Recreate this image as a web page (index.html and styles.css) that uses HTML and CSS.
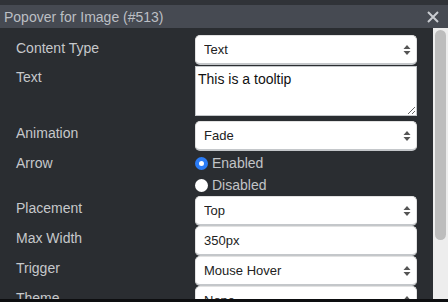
FILE: index.html
```html
<!DOCTYPE html>
<html lang="en">
<head>
  <meta charset="UTF-8">
  <meta name="viewport" content="width=device-width, initial-scale=1.0">
  <title>Popover for Image</title>
  <link rel="stylesheet" href="styles.css">
</head>
<body>
  <div class="dialog">
    <header class="titlebar">
      <h1>Popover for Image (#513)</h1>
      <button class="close" aria-label="Close">
        <svg width="12" height="12" viewBox="0 0 12 12"><path d="M1 1L11 11M11 1L1 11" stroke="#c9ccd1" stroke-width="2"/></svg>
      </button>
    </header>

    <div class="body">
      <form class="settings">
        <label class="label first">Content Type</label>
        <div class="select">
          <select><option>Text</option></select>
          <svg class="arrows" width="8" height="12" viewBox="0 0 8 12"><path d="M4 1L7.5 5H0.5Z M4 11L7.5 7H0.5Z" fill="#555"/></svg>
        </div>

        <label class="label">Text</label>
        <textarea class="textarea">This is a tooltip</textarea>

        <label class="label gap">Animation</label>
        <div class="select gap">
          <select><option>Fade</option></select>
          <svg class="arrows" width="8" height="12" viewBox="0 0 8 12"><path d="M4 1L7.5 5H0.5Z M4 11L7.5 7H0.5Z" fill="#555"/></svg>
        </div>

        <label class="label">Arrow</label>
        <div class="radios">
          <label class="radio"><span class="dot checked"></span>Enabled</label>
          <label class="radio"><span class="dot"></span>Disabled</label>
        </div>

        <label class="label">Placement</label>
        <div class="select">
          <select><option>Top</option></select>
          <svg class="arrows" width="8" height="12" viewBox="0 0 8 12"><path d="M4 1L7.5 5H0.5Z M4 11L7.5 7H0.5Z" fill="#555"/></svg>
        </div>

        <label class="label">Max Width</label>
        <input class="input" type="text" value="350px">

        <label class="label">Trigger</label>
        <div class="select">
          <select><option>Mouse Hover</option></select>
          <svg class="arrows" width="8" height="12" viewBox="0 0 8 12"><path d="M4 1L7.5 5H0.5Z M4 11L7.5 7H0.5Z" fill="#555"/></svg>
        </div>

        <label class="label">Theme</label>
        <div class="select">
          <select><option>None</option></select>
          <svg class="arrows" width="8" height="12" viewBox="0 0 8 12"><path d="M4 1L7.5 5H0.5Z M4 11L7.5 7H0.5Z" fill="#555"/></svg>
        </div>
      </form>

      <div class="scrollbar">
        <div class="thumb"></div>
      </div>
    </div>
  </div>
</body>
</html>
```

FILE: styles.css
```css
html, body {
  margin: 0;
  padding: 0;
  height: 302px;
  overflow: hidden;
}

body {
  background-color: #2a2d31;
  font-family: "Liberation Sans", Arial, sans-serif;
}

.dialog {
  height: 302px;
  overflow: hidden;
  border-top: 5px solid #303338;
  border-bottom: 3px solid #0d0e10;
  box-sizing: border-box;
  display: flex;
  flex-direction: column;
}

.titlebar {
  height: 23px;
  background-color: #464a52;
  display: flex;
  align-items: center;
  justify-content: space-between;
  padding: 0 4px;
  flex-shrink: 0;
}

.titlebar h1 {
  margin: 0;
  font-size: 14px;
  font-weight: normal;
  color: #bcbfc4;
}

.close {
  background: none;
  border: none;
  padding: 0;
  margin-right: 5px;
  display: flex;
}

.body {
  flex: 1;
  display: flex;
  overflow: hidden;
}

.settings {
  flex: 1;
  display: grid;
  grid-template-columns: 195px 222px;
  align-content: start;
  padding-top: 7px;
}

.label {
  padding-left: 16px;
  padding-top: 4px;
  font-size: 14px;
  color: #c6c8cb;
  align-self: start;
}

.label.first {
  padding-top: 5px;
}

.label.gap {
  margin-top: 5px;
}

.select {
  position: relative;
  height: 30px;
}

.select.gap {
  margin-top: 5px;
}

.select select,
.input {
  width: 100%;
  height: 30px;
  box-sizing: border-box;
  appearance: none;
  -webkit-appearance: none;
  background: #fff;
  border: 1px solid #e2e2e2;
  border-bottom: 2px solid #c4c7ca;
  border-radius: 5px;
  padding: 0 8px;
  font-family: "Liberation Sans", Arial, sans-serif;
  font-size: 13px;
  color: #222;
  outline: none;
}

.arrows {
  position: absolute;
  right: 6px;
  top: 9px;
}

.textarea {
  width: 222px;
  height: 50px;
  box-sizing: border-box;
  margin-top: 1px;
  border: 1px solid #c4c7ca;
  border-radius: 0;
  padding: 4px 2px;
  font-family: "Liberation Sans", Arial, sans-serif;
  font-size: 14px;
  color: #111;
  resize: vertical;
}

.radios {
  display: flex;
  flex-direction: column;
  padding-top: 1px;
}

.radio {
  height: 22px;
  display: flex;
  align-items: center;
  gap: 4px;
  font-size: 14px;
  color: #c2c4c7;
}

.dot {
  width: 13px;
  height: 13px;
  border-radius: 50%;
  background: #fff;
  box-sizing: border-box;
  margin-top: 1px;
}

.dot.checked {
  background: #fff;
  border: 4px solid #2b7cf6;
}

.scrollbar {
  width: 15px;
  margin-left: 15px;
  background: #ededed;
  padding: 2px 2px;
  box-sizing: border-box;
  flex-shrink: 0;
}

.thumb {
  height: 210px;
  background: #bdbdbd;
  border-radius: 6px;
}
```
